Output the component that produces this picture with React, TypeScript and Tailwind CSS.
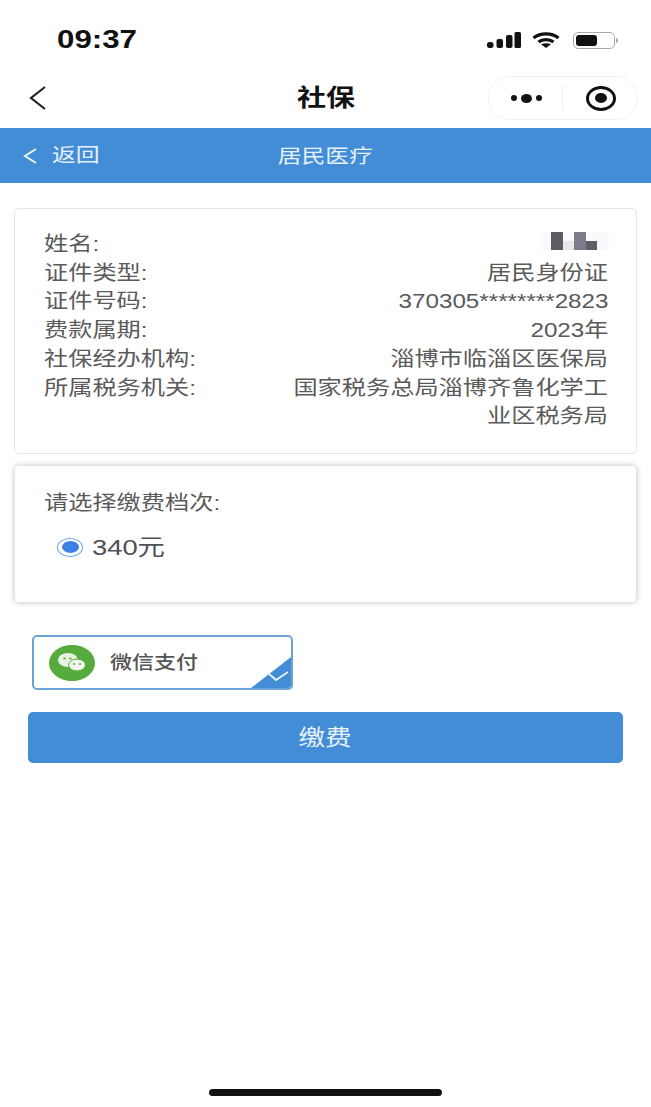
import React from "react";

const font = { fontFamily: '"Liberation Sans", "Noto Sans CJK SC", sans-serif' };

const rows: [string, React.ReactNode][] = [
  ["证件类型:", "居民身份证"],
  ["证件号码:", "370305********2823"],
  ["费款属期:", "2023年"],
  ["社保经办机构:", "淄博市临淄区医保局"],
  ["所属税务机关:", <>国家税务总局淄博齐鲁化学工<br />业区税务局</>],
];

function StatusBar() {
  return (
    <div className="flex h-[70px] items-center justify-between pl-[57px] pr-[33px] pt-[10px]">
      <span className="origin-left scale-x-[1.25] text-[25px] font-bold text-[#111]">09:37</span>
      <div className="flex items-center gap-[11px]">
        <svg width="34" height="16" viewBox="0 0 34 16" fill="#111">
          <rect x="0" y="10" width="6.500" height="6" rx="2.500" />
          <rect x="9.500" y="7" width="6.500" height="9" rx="2" />
          <rect x="19" y="3" width="6.500" height="13" rx="2" />
          <rect x="27.500" y="0" width="6.500" height="16" rx="1.500" />
        </svg>
        <svg width="28" height="16" viewBox="0 0 28 16" fill="none" stroke="#111" strokeWidth="3.400">
          <path d="M1.500 6C8.500 0.500 19.500 0.500 26.500 6" />
          <path d="M6.500 10C10.500 6.800 17.500 6.800 21.500 10" />
          <path d="M14 16L9 12.200C12 10.800 16 10.800 19 12.200Z" fill="#111" stroke="none" />
        </svg>
        <div className="ml-[2px] flex items-center">
          <div className="flex h-[17px] w-[42px] items-center rounded-[5px] border-[1.500px] border-[#aaa] p-[2px]">
            <div className="h-full w-[21px] rounded-[3px] bg-[#111]" />
          </div>
          <div className="ml-[1px] h-[5px] w-[2px] rounded-r bg-[#aaa]" />
        </div>
      </div>
    </div>
  );
}

function NavBar() {
  return (
    <div className="relative flex h-[56px] items-center justify-between pl-[28px] pr-[13px]">
      <svg width="20" height="28" viewBox="0 0 20 28" fill="none" stroke="#222" strokeWidth="2.200">
        <path d="M17 3L3 14L17 25" />
      </svg>
      <div className="absolute inset-x-[200px] flex justify-center">
        <span className="scale-x-[1.21] text-[24px] font-bold text-[#111]">社保</span>
      </div>
      <div className="flex h-[44px] w-[150px] items-center rounded-full border border-[#f2f2f2] bg-white">
        <div className="flex flex-1 items-center justify-center gap-[4px] pl-[2px]">
          <span className="h-[6px] w-[6px] rounded-[50%] bg-[#111]" />
          <span className="h-[9px] w-[11px] rounded-[50%] bg-[#111]" />
          <span className="h-[6px] w-[6px] rounded-[50%] bg-[#111]" />
        </div>
        <div className="h-[26px] w-px bg-[#eee]" />
        <div className="flex w-[74px] items-center justify-center pl-[2px]">
          <div className="flex h-[25px] w-[30px] items-center justify-center rounded-[50%] border-[3px] border-[#111]">
            <span className="h-[10px] w-[12px] rounded-[50%] bg-[#111]" />
          </div>
        </div>
      </div>
    </div>
  );
}

function BlueHeader() {
  return (
    <div className="relative mt-[2px] flex h-[55px] items-center bg-[#428dd5] pl-[23px] text-white">
      <svg width="14" height="20" viewBox="0 0 14 20" fill="none" stroke="#e8f1fb" strokeWidth="2">
        <path d="M13 3L2 10L13 17" />
      </svg>
      <span className="ml-[15px] origin-left scale-x-[1.21] text-[19.700px] text-[#e8f1fb]">返回</span>
      <div className="absolute inset-x-[200px] flex translate-y-[1px] justify-center">
        <span className="scale-x-[1.21] text-[19.700px] text-[#e8f1fb]">居民医疗</span>
      </div>
    </div>
  );
}

function InfoCard() {
  return (
    <div className="mx-[14px] mt-[25px] h-[246px] rounded-[5px] border border-[#e2e4e6] bg-white pl-[29px] pr-[28px] pt-[21px] text-[20px] leading-[28.700px] text-[#5a5a5a]">
      <div className="flex justify-between">
        <span className="origin-left scale-x-[1.21]">姓名:</span>
        <div className="mr-[-1px] mt-[2px] flex h-[18px] w-[68px] items-end bg-[#fafafc] pl-[10px]">
          <span className="h-[18px] w-[12px] bg-[#5c5c62]" />
          <span className="h-[9px] w-[11px] bg-[#e6e7ec]" />
          <span className="h-[18px] w-[12px] bg-[#7b7b8c]" />
          <span className="h-[9px] w-[11px] bg-[#5f5f68]" />
        </div>
      </div>
      {rows.map(([label, value]) => (
        <div key={label} className="flex justify-between">
          <span className="shrink-0 origin-left scale-x-[1.21]">{label}</span>
          <span className="origin-right scale-x-[1.21] text-right">{value}</span>
        </div>
      ))}
    </div>
  );
}

function LevelCard() {
  return (
    <div className="mx-[15px] mt-[12px] h-[136px] rounded-[4px] bg-white pl-[29px] pt-[23px] shadow-[0_0_6px_rgba(0,0,0,0.28)]">
      <div className="w-fit origin-left scale-x-[1.21] text-[20px] leading-[28px] text-[#5a5a5a]">请选择缴费档次:</div>
      <div className="mt-[16px] flex items-center pl-[13px]">
        <div className="flex h-[19px] w-[26px] items-center justify-center rounded-[50%] border-[1.500px] border-[#6ea3e0]">
          <span className="h-[12px] w-[17px] rounded-[50%] bg-[#3f80e6]" />
        </div>
        <span className="ml-[9px] origin-left translate-y-[1px] scale-x-[1.21] text-[22.600px] leading-[28px] text-[#4f4f58]">340元</span>
      </div>
    </div>
  );
}

function WeChatOption() {
  return (
    <div className="relative ml-[32px] mt-[33px] flex h-[55px] w-[261px] items-center overflow-hidden rounded-[5px] border-2 border-[#6aa3d4] bg-white pl-[15px]">
      <svg width="46" height="36" viewBox="0 0 46 36">
        <ellipse cx="23" cy="18" rx="23" ry="18" fill="#57aa3c" />
        <ellipse cx="19" cy="15" rx="10" ry="7" fill="#e9f3e5" />
        <ellipse cx="28" cy="20" rx="8.500" ry="6" fill="#f1f7ee" stroke="#57aa3c" strokeWidth="1" />
        <ellipse cx="15.500" cy="13.500" rx="1.300" ry="1.100" fill="#57aa3c" />
        <ellipse cx="21.500" cy="13.500" rx="1.300" ry="1.100" fill="#57aa3c" />
        <circle cx="25" cy="19" r="1" fill="#57aa3c" />
        <circle cx="31" cy="19" r="1" fill="#57aa3c" />
      </svg>
      <span className="ml-[15px] origin-left translate-y-[1px] scale-x-[1.21] text-[18.200px] font-medium text-[#555]">微信支付</span>
      {/* selected corner */}
      <svg className="absolute bottom-0 right-0" width="40" height="31" viewBox="0 0 40 31">
        <path d="M40 0V31H0Z" fill="#428dd5" />
        <path d="M17 16L25 23L37 15" fill="none" stroke="#eaf3fb" strokeWidth="1.800" />
      </svg>
    </div>
  );
}

export default function App() {
  return (
    <div className="flex min-h-[1107px] w-[651px] flex-col bg-white" style={font}>
      <StatusBar />
      <NavBar />
      <BlueHeader />
      <InfoCard />
      <LevelCard />
      <WeChatOption />
      <button className="mx-[28px] mt-[22px] h-[51px] rounded-[5px] bg-[#428dd5] text-[#e8f1fb]">
        <span className="inline-block scale-x-[1.21] text-[22px]">缴费</span>
      </button>
      <div className="mb-[11px] mt-auto h-[7px] w-[233px] self-center rounded-full bg-[#111]" />
    </div>
  );
}
